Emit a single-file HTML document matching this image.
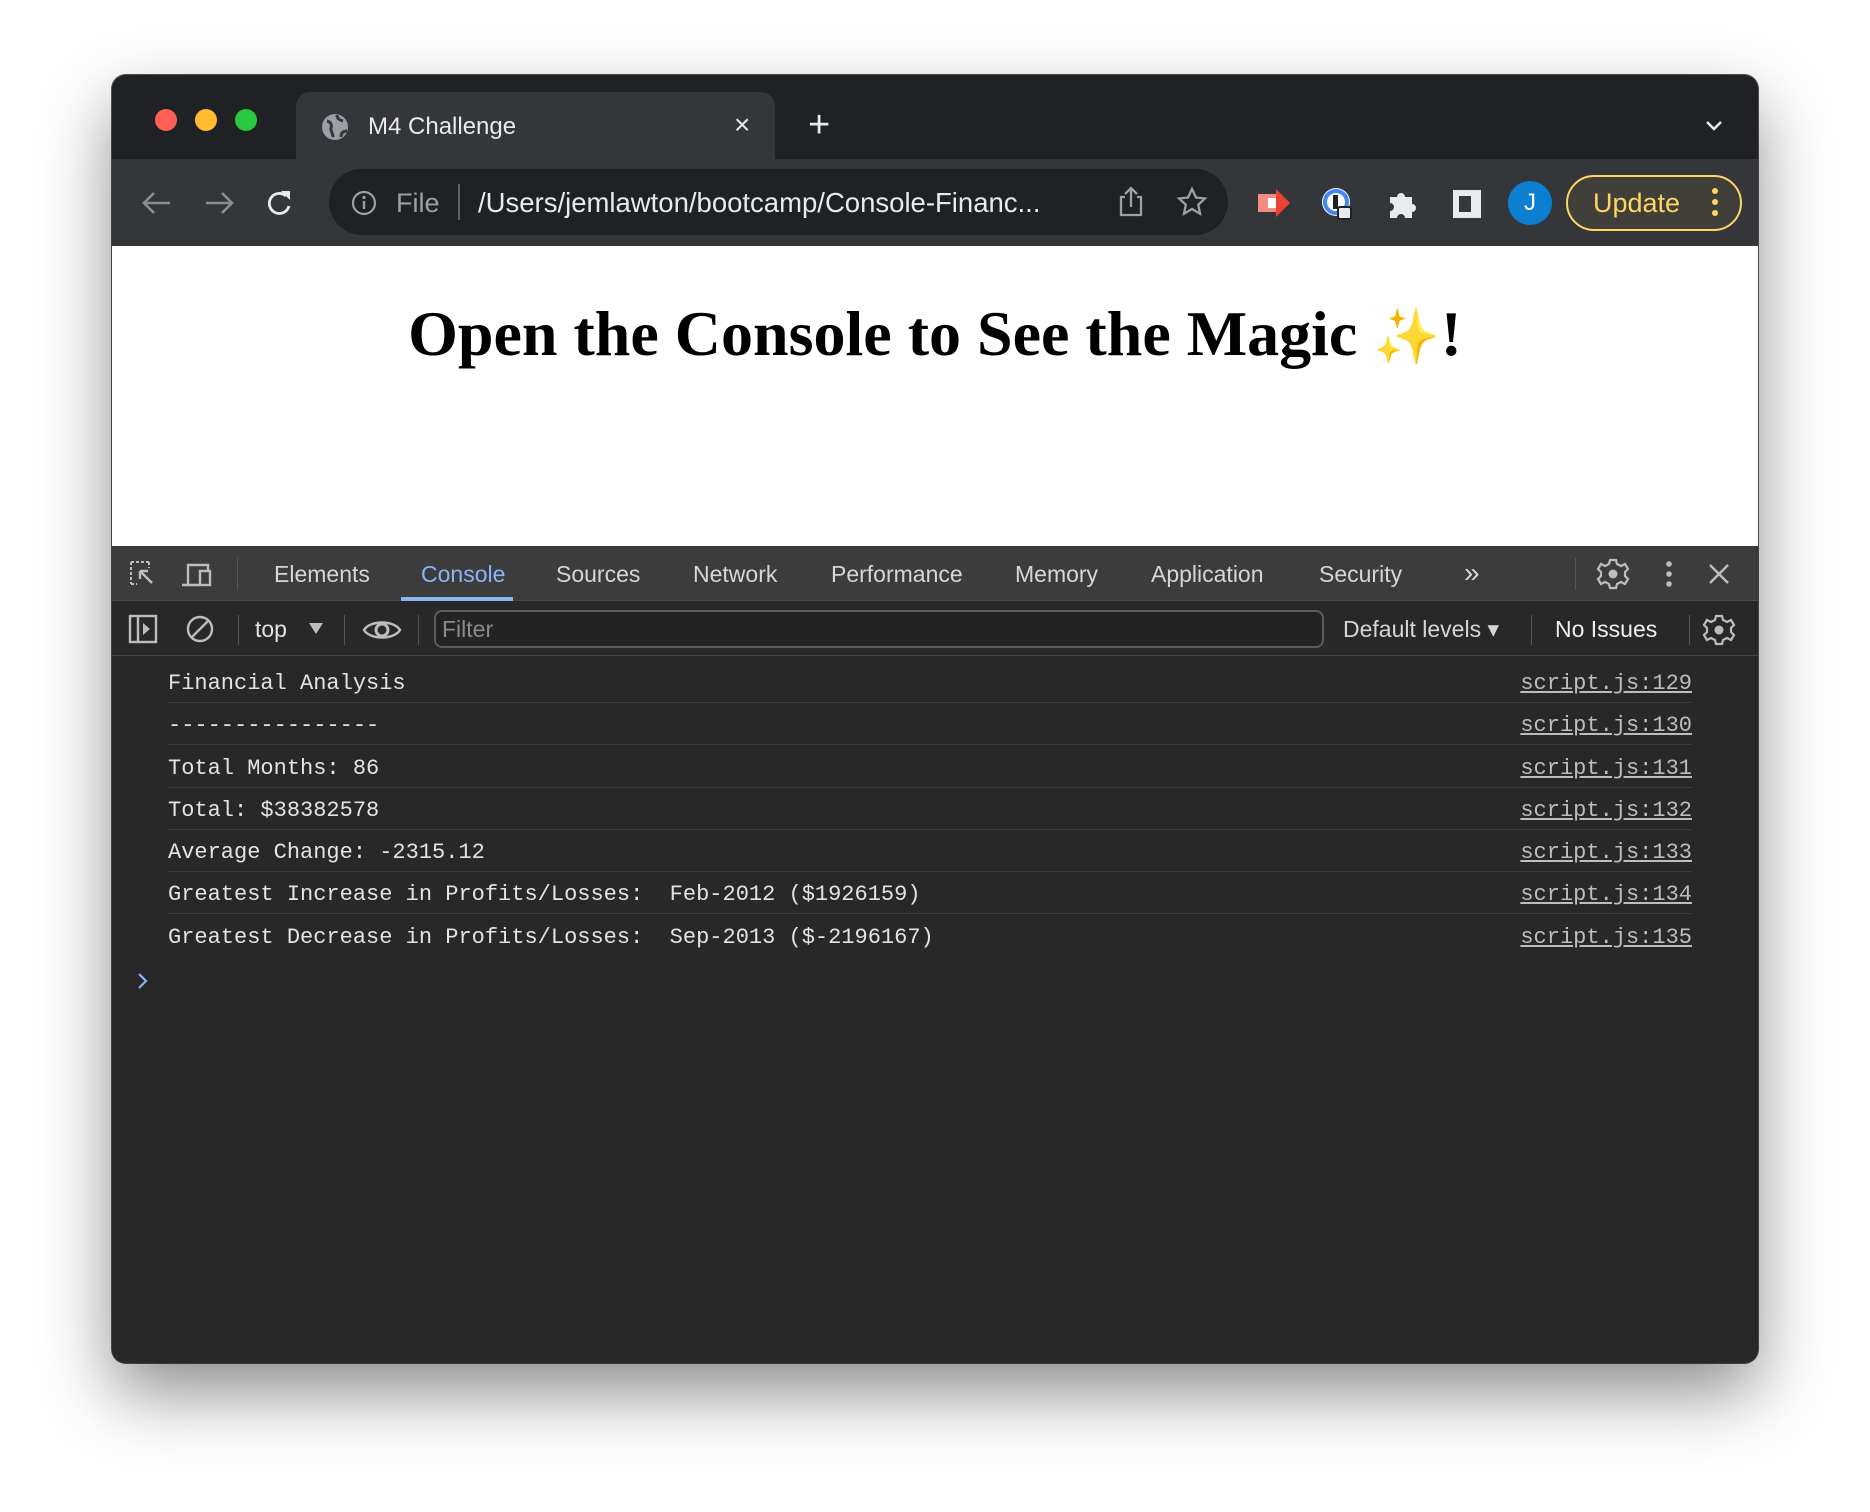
<!DOCTYPE html>
<html><head><meta charset="utf-8"><style>
*{margin:0;padding:0;box-sizing:border-box}
body{width:1870px;height:1512px;background:#fff;position:relative;overflow:hidden;font-family:"Liberation Sans",sans-serif}
.win{position:absolute;left:112px;top:75px;width:1646px;height:1288px;border-radius:14px;background:#202124;overflow:hidden;box-shadow:0 30px 70px rgba(0,0,0,.45),0 0 0 1px #555}
.a{position:absolute}
.mono{font-family:"Liberation Mono",monospace;font-size:22px;color:#e3e3e3}
.row{position:absolute;left:56px;right:66px;height:42px;border-bottom:1px solid #3d3d3d}
.row span.t{position:absolute;left:0;top:10px;white-space:pre}
.row span.l{position:absolute;right:0;top:10px;text-decoration:underline;color:#bdbdbd}
.tab{position:absolute;top:13px;font-size:23px;color:#d6d6d6}
</style></head><body>
<div class="win">
  <div class="a" style="left:43px;top:34px;width:22px;height:22px;border-radius:50%;background:#fe5f57"></div>
  <div class="a" style="left:83px;top:34px;width:22px;height:22px;border-radius:50%;background:#febc2e"></div>
  <div class="a" style="left:123px;top:34px;width:22px;height:22px;border-radius:50%;background:#28c840"></div>
  <div class="a" style="left:184px;top:17px;width:479px;height:70px;background:#35363a;border-radius:14px 14px 0 0"></div>
  <svg class="a" style="left:209px;top:38px" width="28" height="28" viewBox="0 0 28 28"><circle cx="14" cy="14" r="13" fill="#9aa0a6"/><path d="M6 8c4 1 5 4 4 7s2 4 2 9M16 2c0 4 3 5 6 6M20 24c0-4 2-6 6-6" stroke="#35363a" stroke-width="3" fill="none"/></svg>
  <div class="a" style="left:256px;top:38px;font-size:24px;color:#e8eaed">M4 Challenge</div>
  <div class="a" style="left:622px;top:34px;font-size:28px;color:#e8eaed">×</div>
  <div class="a" style="left:696px;top:29px;font-size:38px;color:#e8eaed;font-weight:300">+</div>
  <svg class="a" style="left:1592px;top:44px" width="20" height="14"><path d="M3 3l7 7 7-7" stroke="#e8eaed" stroke-width="2.5" fill="none"/></svg>
  <div class="a" style="left:0;top:84px;width:1646px;height:87px;background:#35363a"></div>
  <svg class="a" style="left:28px;top:110px" width="160" height="36"><g stroke="#8a8d91" stroke-width="2.6" fill="none"><path d="M30 18H4M14 8L4 18l10 10"/><path d="M66 18h26M82 8l10 10-10 10"/></g><path d="M146 11a10 10 0 1 0 3 10" stroke="#e8eaed" stroke-width="2.8" fill="none"/><path d="M141 6h9v9z" fill="#e8eaed"/></svg>
  <div class="a" style="left:217px;top:94px;width:899px;height:66px;background:#202124;border-radius:33px"></div>
  <svg class="a" style="left:238px;top:114px" width="28" height="28"><circle cx="14" cy="14" r="11" stroke="#9aa0a6" stroke-width="2.2" fill="none"/><path d="M14 12v8" stroke="#9aa0a6" stroke-width="2.4"/><circle cx="14" cy="8.5" r="1.6" fill="#9aa0a6"/></svg>
  <div class="a" style="left:284px;top:113px;font-size:27px;color:#9aa0a6">File</div>
  <div class="a" style="left:346px;top:109px;width:2px;height:36px;background:#5f6368"></div>
  <div class="a" style="left:366px;top:112px;font-size:27.5px;color:#e8eaed;white-space:nowrap">/Users/jemlawton/bootcamp/Console-Financ...</div>
  <svg class="a" style="left:1004px;top:110px" width="30" height="34"><path d="M9 12H5v18h20V12h-4M15 22V3M9 9l6-6 6 6" stroke="#9aa0a6" stroke-width="2.3" fill="none"/></svg>
  <svg class="a" style="left:1064px;top:111px" width="32" height="32"><path d="M16 3l4 8.5 9 1-6.7 6.2 1.8 9L16 23l-8 4.7 1.8-9L3 12.5l9-1z" stroke="#9aa0a6" stroke-width="2.3" fill="none"/></svg>
  <svg class="a" style="left:1144px;top:114px" width="36" height="28"><rect x="2" y="5" width="22" height="18" fill="#f28b82"/><path d="M20 0l14 14-14 14z" fill="#ea4335"/><rect x="12" y="9" width="8" height="10" fill="#fff"/></svg>
  <svg class="a" style="left:1208px;top:110px" width="36" height="36"><circle cx="16" cy="17" r="14" fill="#fff"/><circle cx="16" cy="17" r="11" fill="none" stroke="#4285f4" stroke-width="4"/><rect x="13" y="10" width="5" height="14" fill="#202124"/><rect x="18" y="22" width="13" height="12" rx="2" fill="#e8eaed" stroke="#202124" stroke-width="2"/></svg>
  <svg class="a" style="left:1274px;top:112px" width="32" height="32"><path d="M4 10h7a4 4 0 1 1 8 0h7v7a4 4 0 1 1 0 8v6h-7a4 4 0 1 0-8 0H4v-7a4 4 0 1 0 0-8z" fill="#e8eaed"/></svg>
  <div class="a" style="left:1341px;top:115px;width:28px;height:28px;background:#e8eaed"></div>
  <div class="a" style="left:1347px;top:121px;width:12px;height:16px;background:#35363a"></div>
  <div class="a" style="left:1396px;top:106px;width:44px;height:44px;border-radius:50%;background:#0c7fd0;color:#fff;font-size:24px;text-align:center;line-height:44px">J</div>
  <div class="a" style="left:1454px;top:100px;width:176px;height:56px;border-radius:28px;border:2px solid #fdd663;background:#413f3a"></div>
  <div class="a" style="left:1481px;top:113px;font-size:27px;color:#fdd663">Update</div>
  <svg class="a" style="left:1598px;top:110px" width="10" height="36"><circle cx="5" cy="6" r="3" fill="#fdd663"/><circle cx="5" cy="17" r="3" fill="#fdd663"/><circle cx="5" cy="28" r="3" fill="#fdd663"/></svg>
  <div class="a" style="left:0;top:171px;width:1646px;height:300px;background:#fff"></div>
  <div class="a" style="left:0;top:222px;width:1646px;text-align:center;font-family:'Liberation Serif',serif;font-weight:bold;font-size:64px;color:#000">Open the Console to See the Magic <span style="color:#f5c518;font-family:'DejaVu Sans',sans-serif;font-weight:normal;font-size:54px">✨</span>!</div>
  <div class="a" style="left:0;top:471px;width:1646px;height:817px;background:#282828"></div>
  <div class="a" style="left:0;top:471px;width:1646px;height:55px;background:#3c3c3c;border-bottom:1px solid #4a4a4a"></div>
  <svg class="a" style="left:16px;top:484px" width="90" height="32"><path d="M3 3h18M3 3v22M3 25h6M21 3v6" stroke="#bdbdbd" stroke-width="2" stroke-dasharray="3 2" fill="none"/><path d="M12 12l12 12M12 12h8M12 12v8" stroke="#bdbdbd" stroke-width="2.4" fill="none"/><path d="M60 26V6h20v5M54 26h18" stroke="#bdbdbd" stroke-width="2.4" fill="none"/><rect x="72" y="12" width="10" height="14" stroke="#bdbdbd" stroke-width="2.4" fill="none"/></svg>
  <div class="a" style="left:125px;top:483px;width:1px;height:32px;background:#555"></div>
  <div class="tab" style="left:162px;top:486px">Elements</div>
  <div class="tab" style="left:309px;top:486px;color:#8ab4f8">Console</div>
  <div class="a" style="left:289px;top:522px;width:112px;height:4px;background:#8ab4f8"></div>
  <div class="tab" style="left:444px;top:486px">Sources</div>
  <div class="tab" style="left:581px;top:486px">Network</div>
  <div class="tab" style="left:719px;top:486px">Performance</div>
  <div class="tab" style="left:903px;top:486px">Memory</div>
  <div class="tab" style="left:1039px;top:486px">Application</div>
  <div class="tab" style="left:1207px;top:486px">Security</div>
  <div class="tab" style="left:1352px;top:482px;font-size:28px">»</div>
  <div class="a" style="left:1463px;top:483px;width:1px;height:32px;background:#555"></div>
  <svg class="a" style="left:1484px;top:482px" width="34" height="34" viewBox="0 0 34 34"><circle cx="17" cy="17" r="4.5" fill="#bdbdbd"/><path d="M14 3h6l1 4 4 2 4-2 3 5-3 3v4l3 3-3 5-4-2-4 2-1 4h-6l-1-4-4-2-4 2-3-5 3-3v-4l-3-3 3-5 4 2 4-2z" stroke="#bdbdbd" stroke-width="2.2" fill="none"/></svg>
  <svg class="a" style="left:1552px;top:484px" width="10" height="30"><circle cx="5" cy="5" r="2.8" fill="#bdbdbd"/><circle cx="5" cy="15" r="2.8" fill="#bdbdbd"/><circle cx="5" cy="25" r="2.8" fill="#bdbdbd"/></svg>
  <svg class="a" style="left:1596px;top:488px" width="22" height="22"><path d="M2 2l18 18M20 2L2 20" stroke="#bdbdbd" stroke-width="2.4"/></svg>
  <div class="a" style="left:0;top:526px;width:1646px;height:55px;background:#282828;border-bottom:1px solid #454545"></div>
  <svg class="a" style="left:16px;top:539px" width="100" height="30"><rect x="2" y="2" width="26" height="26" stroke="#bdbdbd" stroke-width="2.4" fill="none"/><path d="M10 2v26" stroke="#bdbdbd" stroke-width="2.4"/><path d="M15 9l7 6-7 6z" fill="#bdbdbd"/><circle cx="72" cy="15" r="12" stroke="#bdbdbd" stroke-width="2.4" fill="none"/><path d="M64 23l16-16" stroke="#bdbdbd" stroke-width="2.4"/></svg>
  <div class="a" style="left:126px;top:540px;width:1px;height:30px;background:#555"></div>
  <div class="a" style="left:143px;top:541px;font-size:23px;color:#e3e3e3">top</div>
  <svg class="a" style="left:196px;top:546px" width="16" height="14"><path d="M1 2h14L8 13z" fill="#bdbdbd"/></svg>
  <div class="a" style="left:232px;top:540px;width:1px;height:30px;background:#555"></div>
  <svg class="a" style="left:250px;top:540px" width="40" height="30"><path d="M2 15C8 5 32 5 38 15 32 25 8 25 2 15z" stroke="#bdbdbd" stroke-width="2.4" fill="none"/><circle cx="20" cy="15" r="6" stroke="#bdbdbd" stroke-width="3" fill="none"/></svg>
  <div class="a" style="left:306px;top:540px;width:1px;height:30px;background:#555"></div>
  <div class="a" style="left:322px;top:535px;width:890px;height:38px;border:2px solid #5c5c5c;border-radius:8px;background:#242424"></div>
  <div class="a" style="left:330px;top:541px;font-size:23px;color:#8a8a8a">Filter</div>
  <div class="a" style="left:1231px;top:541px;font-size:23px;color:#d6d6d6">Default levels ▾</div>
  <div class="a" style="left:1419px;top:540px;width:1px;height:30px;background:#555"></div>
  <div class="a" style="left:1443px;top:541px;font-size:23px;color:#f0f0f0">No Issues</div>
  <div class="a" style="left:1577px;top:540px;width:1px;height:30px;background:#555"></div>
  <svg class="a" style="left:1590px;top:538px" width="34" height="34" viewBox="0 0 34 34"><circle cx="17" cy="17" r="4.5" fill="#bdbdbd"/><path d="M14 3h6l1 4 4 2 4-2 3 5-3 3v4l3 3-3 5-4-2-4 2-1 4h-6l-1-4-4-2-4 2-3-5 3-3v-4l-3-3 3-5 4 2 4-2z" stroke="#bdbdbd" stroke-width="2.2" fill="none"/></svg>
  <div class="mono">
    <div class="row" style="top:586px"><span class="t">Financial Analysis</span><span class="l">script.js:129</span></div>
    <div class="row" style="top:628px"><span class="t">----------------</span><span class="l">script.js:130</span></div>
    <div class="row" style="top:671px"><span class="t">Total Months: 86</span><span class="l">script.js:131</span></div>
    <div class="row" style="top:713px"><span class="t">Total: $38382578</span><span class="l">script.js:132</span></div>
    <div class="row" style="top:755px"><span class="t">Average Change: -2315.12</span><span class="l">script.js:133</span></div>
    <div class="row" style="top:797px"><span class="t">Greatest Increase in Profits/Losses:  Feb-2012 ($1926159)</span><span class="l">script.js:134</span></div>
    <div class="row" style="top:840px;border-bottom:none"><span class="t">Greatest Decrease in Profits/Losses:  Sep-2013 ($-2196167)</span><span class="l">script.js:135</span></div>
  </div>
  <svg class="a" style="left:24px;top:896px" width="14" height="20"><path d="M3 3l7 7-7 7" stroke="#8ab4f8" stroke-width="2.2" fill="none"/></svg>
</div>
</body></html>
